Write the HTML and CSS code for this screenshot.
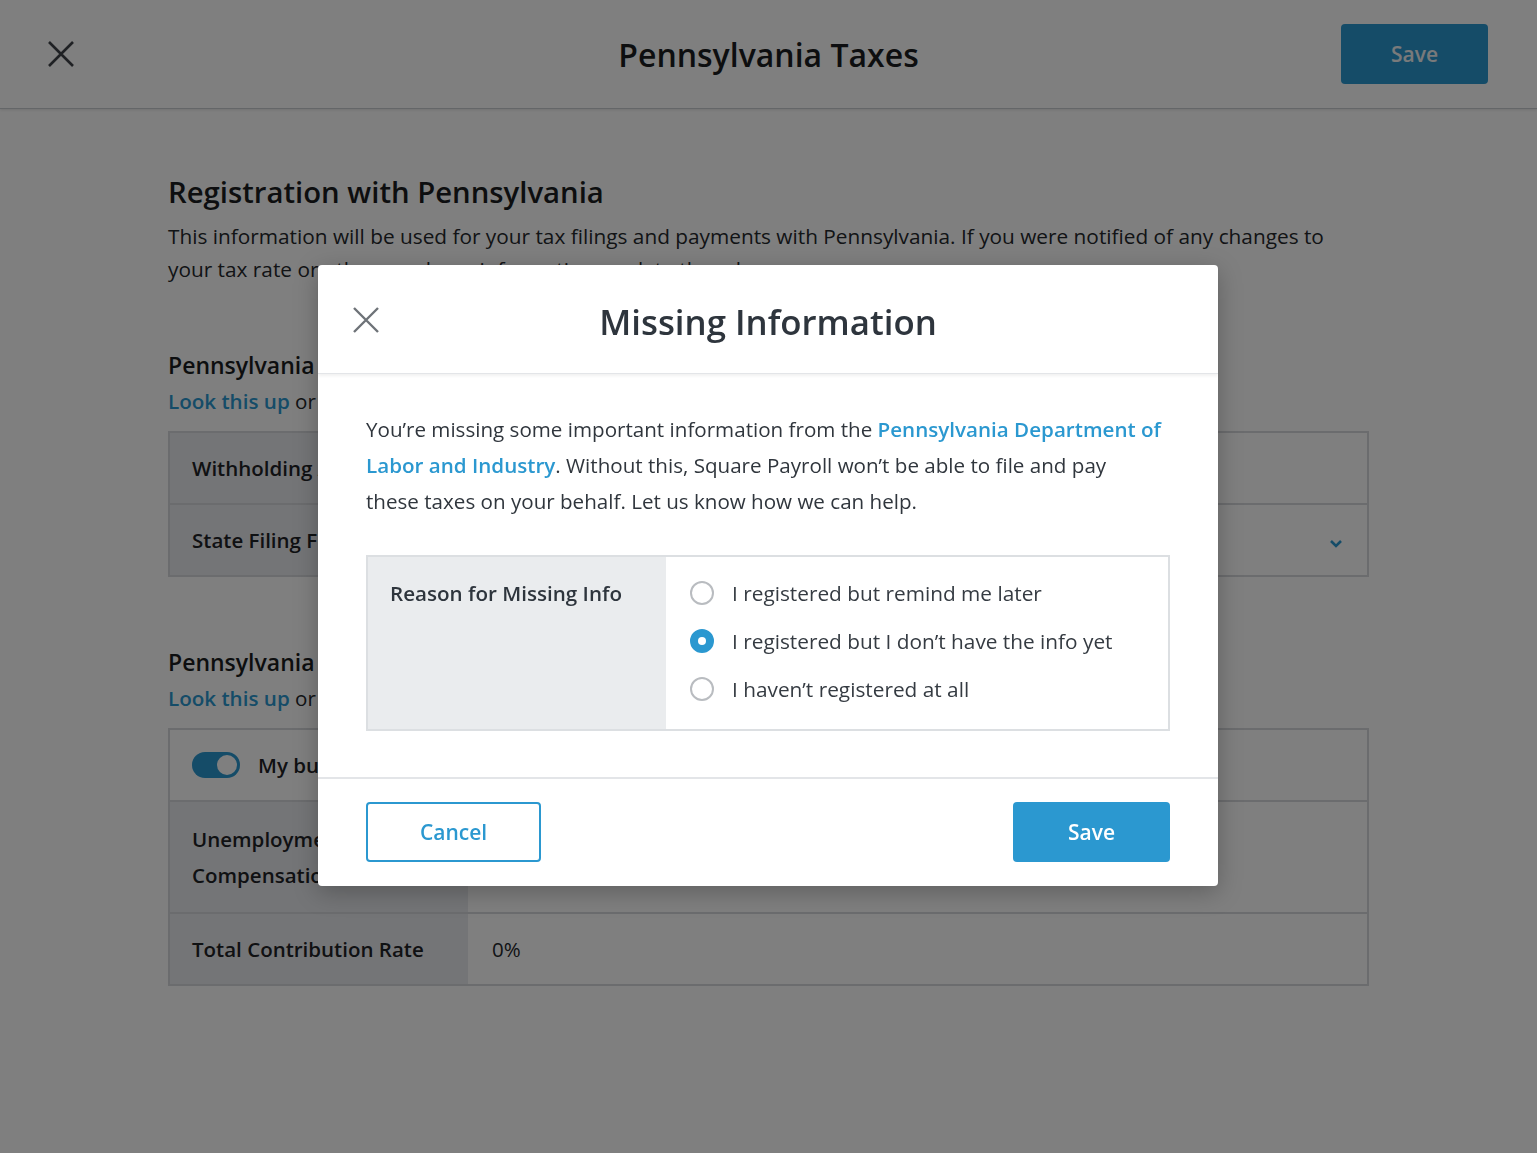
FILE: index.html
```html
<!DOCTYPE html>
<html lang="en">
<head>
<meta charset="utf-8">
<title>Pennsylvania Taxes</title>
<link rel="stylesheet" href="styles.css">
</head>
<body>
<header class="topbar">
  <button class="icon-btn" aria-label="Close">
    <svg width="28" height="28" viewBox="0 0 28 28"><path d="M2 2 L26 26 M26 2 L2 26" stroke="#3f4348" stroke-width="2.6" fill="none"/></svg>
  </button>
  <h1 class="topbar-title">Pennsylvania Taxes</h1>
  <button class="btn btn-primary btn-top">Save</button>
</header>

<main class="content">
  <section class="section">
    <h2 class="section-title">Registration with Pennsylvania</h2>
    <p class="section-text">This information will be used for your tax filings and payments with Pennsylvania. If you were notified of any changes to your tax rate or other employer information, update them here.</p>
  </section>

  <section class="section section-sub">
    <h3 class="sub-title">Pennsylvania Withholding Tax</h3>
    <p class="hint"><a class="link" href="#">Look this up</a> or enter it below.</p>
    <div class="table">
      <div class="row">
        <div class="cell-label">Withholding Account ID</div>
        <div class="cell-value"></div>
      </div>
      <div class="row">
        <div class="cell-label">State Filing Frequency</div>
        <div class="cell-value cell-select">
          <svg width="14" height="10" viewBox="0 0 14 10"><path d="M2 2 L7 7 L12 2" stroke="#2b98d0" stroke-width="2.6" fill="none"/></svg>
        </div>
      </div>
    </div>
  </section>

  <section class="section section-sub2">
    <h3 class="sub-title">Pennsylvania Unemployment</h3>
    <p class="hint"><a class="link" href="#">Look this up</a> or enter it below.</p>
    <div class="table">
      <div class="row row-full">
        <span class="toggle"><span class="knob"></span></span>
        <span class="toggle-label">My business is exempt</span>
      </div>
      <div class="row row-tall">
        <div class="cell-label">Unemployment<br>Compensation Rate</div>
        <div class="cell-value"></div>
      </div>
      <div class="row">
        <div class="cell-label">Total Contribution Rate</div>
        <div class="cell-value">0%</div>
      </div>
    </div>
  </section>
</main>

<div class="overlay"></div>

<div class="modal" role="dialog">
  <div class="modal-header">
    <button class="icon-btn modal-close" aria-label="Close">
      <svg width="28" height="28" viewBox="0 0 28 28"><path d="M2 2 L26 26 M26 2 L2 26" stroke="#6e7378" stroke-width="2.4" fill="none"/></svg>
    </button>
    <h2 class="modal-title">Missing Information</h2>
  </div>
  <div class="modal-body">
    <p class="modal-text">You’re missing some important information from the <a class="link" href="#">Pennsylvania Department of Labor and Industry</a>. Without this, Square Payroll won’t be able to file and pay these taxes on your behalf. Let us know how we can help.</p>
    <div class="field">
      <div class="field-label">Reason for Missing Info</div>
      <div class="field-options">
        <label class="option"><span class="radio"></span>I registered but remind me later</label>
        <label class="option"><span class="radio radio-on"></span>I registered but I don’t have the info yet</label>
        <label class="option"><span class="radio"></span>I haven’t registered at all</label>
      </div>
    </div>
  </div>
  <div class="modal-footer">
    <button class="btn btn-secondary">Cancel</button>
    <button class="btn btn-primary btn-save">Save</button>
  </div>
</div>
</body>
</html>
```

FILE: styles.css
```css
* { box-sizing: border-box; }
html, body { margin: 0; padding: 0; }
body {
  background: #ffffff;
  font-family: "Open Sans", "Lato", sans-serif;
  color: #1f2226;
  width: 1537px;
  height: 1153px;
  overflow: hidden;
}
button { font-family: inherit; cursor: pointer; }

.topbar {
  height: 109px;
  display: flex;
  align-items: center;
  justify-content: space-between;
  padding: 0 49px 0 46px;
  border-bottom: 1px solid #c9ccd0;
  box-shadow: 0 1px 3px rgba(0,0,0,0.12);
  position: relative;
}
.icon-btn {
  background: none;
  border: 0;
  padding: 0;
  width: 30px;
  height: 30px;
  display: flex;
  align-items: center;
  justify-content: center;
}
.topbar-title {
  margin: 0;
  font-size: 32px;
  font-weight: 600;
  color: #1b1d20;
  position: absolute;
  left: 0;
  right: 0;
  text-align: center;
  pointer-events: none;
}
.btn {
  border-radius: 4px;
  font-size: 21px;
  font-weight: 600;
  height: 60px;
}
.btn-primary {
  background: #2b98d0;
  color: #ffffff;
  border: 0;
}
.btn-top {
  width: 147px;
  color: #f2f4f6;
}
.btn-secondary {
  background: #fff;
  color: #2b98d0;
  border: 2px solid #2b98d0;
  width: 175px;
}
.btn-save { width: 157px; }

.content {
  padding: 0 168px;
}
.section-title {
  margin: 63px 0 0;
  font-size: 29.3px;
  line-height: 40px;
  font-weight: 600;
  color: #1b1d20;
}
.section-text {
  margin: 8px 0 0;
  max-width: 1175px;
  font-size: 20.8px;
  line-height: 33px;
  color: #25282c;
}
.section-sub { margin-top: 63px; }
.section-sub2 { margin-top: 69px; }
.sub-title {
  margin: 0;
  font-size: 23px;
  line-height: 32px;
  font-weight: 600;
  color: #1b1d20;
}
.hint {
  margin: 4px 0 0;
  font-size: 20.6px;
  line-height: 32px;
  color: #25282c;
}
.link {
  color: #2b98d0;
  text-decoration: none;
  font-weight: 600;
}
.table {
  margin-top: 14px;
  border: 2px solid #d6d9dc;
  border-bottom: 0;
}
.row {
  display: flex;
  min-height: 72px;
  border-bottom: 2px solid #d6d9dc;
}
.row-tall { min-height: 112px; }
.cell-label {
  width: 298px;
  background: #e9ebee;
  padding: 17px 22px;
  font-size: 20.5px;
  line-height: 36px;
  font-weight: 600;
  color: #1f2226;
  display: flex;
  align-items: center;
}
.cell-value {
  flex: 1;
  padding: 0 24px;
  font-size: 20.5px;
  display: flex;
  align-items: center;
  color: #25282c;
}
.cell-select { justify-content: flex-end; padding: 8px 24px 0 0; }
.row-full {
  align-items: center;
  padding-left: 22px;
  gap: 18px;
}
.toggle {
  width: 48px;
  height: 26px;
  border-radius: 13px;
  background: #2b98d0;
  display: flex;
  align-items: center;
  justify-content: flex-end;
  padding-right: 3px;
}
.knob {
  width: 20px;
  height: 20px;
  border-radius: 50%;
  background: #fff;
}
.toggle-label {
  font-size: 20.5px;
  font-weight: 600;
}

.overlay {
  position: fixed;
  inset: 0;
  background: rgba(0,0,0,0.5);
}

.modal {
  position: absolute;
  left: 318px;
  top: 265px;
  width: 900px;
  background: #ffffff;
  border-radius: 4px;
  box-shadow: 0 6px 24px rgba(0,0,0,0.25);
}
.modal-header {
  height: 109px;
  display: flex;
  align-items: center;
  justify-content: center;
  position: relative;
  border-bottom: 1px solid #e3e5e8;
  box-shadow: 0 2px 3px rgba(0,0,0,0.06);
}
.modal-close {
  position: absolute;
  left: 33px;
  top: 40px;
}
.modal-title {
  margin: 4px 0 0;
  font-size: 34.8px;
  font-weight: 600;
  color: #2e353d;
}
.modal-body {
  padding: 37px 48px 46px;
}
.modal-text {
  margin: 0;
  max-width: 797px;
  font-size: 20.6px;
  line-height: 36px;
  color: #30363d;
}
.field {
  margin-top: 36px;
  display: flex;
  border: 2px solid #dcdfe2;
}
.field-label {
  width: 298px;
  background: #eaecee;
  padding: 12px 22px;
  font-size: 20.6px;
  line-height: 48px;
  font-weight: 600;
  color: #2e353d;
}
.field-options {
  flex: 1;
  padding: 12px 24px 16px;
  display: flex;
  flex-direction: column;
}
.option {
  display: flex;
  align-items: center;
  gap: 18px;
  height: 48px;
  font-size: 20.8px;
  color: #353b42;
}
.radio {
  flex: none;
  width: 24px;
  height: 24px;
  border-radius: 50%;
  border: 2px solid #b9bcc0;
  background: #fff;
  display: flex;
  align-items: center;
  justify-content: center;
}
.radio-on {
  background: #2b98d0;
  border-color: #2b98d0;
}
.radio-on::after {
  content: "";
  width: 8px;
  height: 8px;
  border-radius: 50%;
  background: #fff;
}
.modal-footer {
  border-top: 2px solid #e3e5e8;
  padding: 23px 48px 24px;
  display: flex;
  justify-content: space-between;
  align-items: center;
}
```
